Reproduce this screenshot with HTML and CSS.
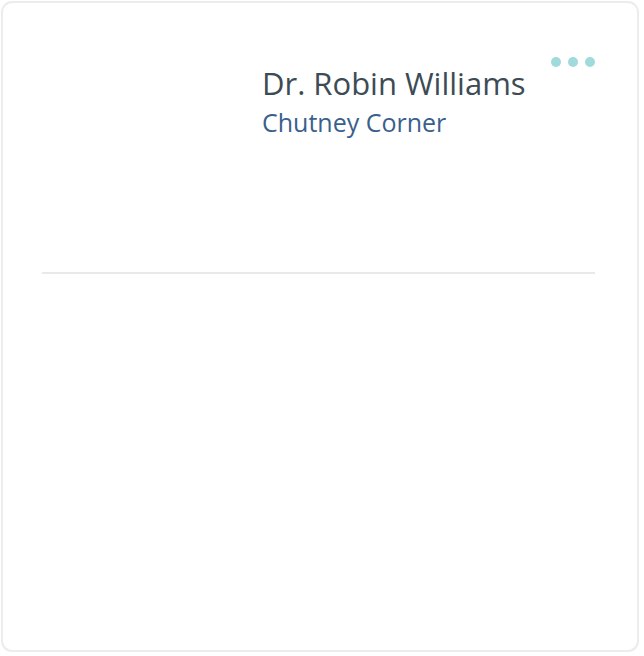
FILE: index.html
```html
<!DOCTYPE html>
<html>
<head>
<meta charset="utf-8">
<link rel="stylesheet" href="styles.css">
</head>
<body>
<div class="card">
  <div class="header">
    <div class="avatar"></div>
    <div class="info">
      <div class="name">Dr. Robin Williams</div>
      <div class="place">Chutney Corner</div>
    </div>
    <div class="more"><span></span><span></span><span></span></div>
  </div>
  <div class="divider"></div>
</div>
</body>
</html>
```
FILE: styles.css
```css
html, body { margin: 0; padding: 0; background: #fff; }
body { font-family: "Open Sans", "Noto Sans", sans-serif; }
.card {
  box-sizing: border-box;
  margin: 1px 0 0 1px;
  width: 638px;
  height: 651px;
  border: 2px solid #ececec;
  border-radius: 11px;
  padding: 0 42px 0 39px;
  background: #fff;
}
.header {
  display: flex;
  height: 269px;
}
.avatar { width: 220px; flex: none; }
.info { flex: 1; padding-top: 58px; }
.name {
  font-size: 31px;
  line-height: 44px;
  color: #3c4b55;
}
.place {
  font-size: 25px;
  line-height: 30px;
  margin-top: 2px;
  color: #3b5f8c;
}
.more {
  display: flex;
  gap: 7px;
  padding-top: 54px;
}
.more span {
  width: 10px; height: 10px; border-radius: 50%;
  background: #a1dadd;
}
.divider {
  height: 2px;
  background: #e9e9e9;
}
```
